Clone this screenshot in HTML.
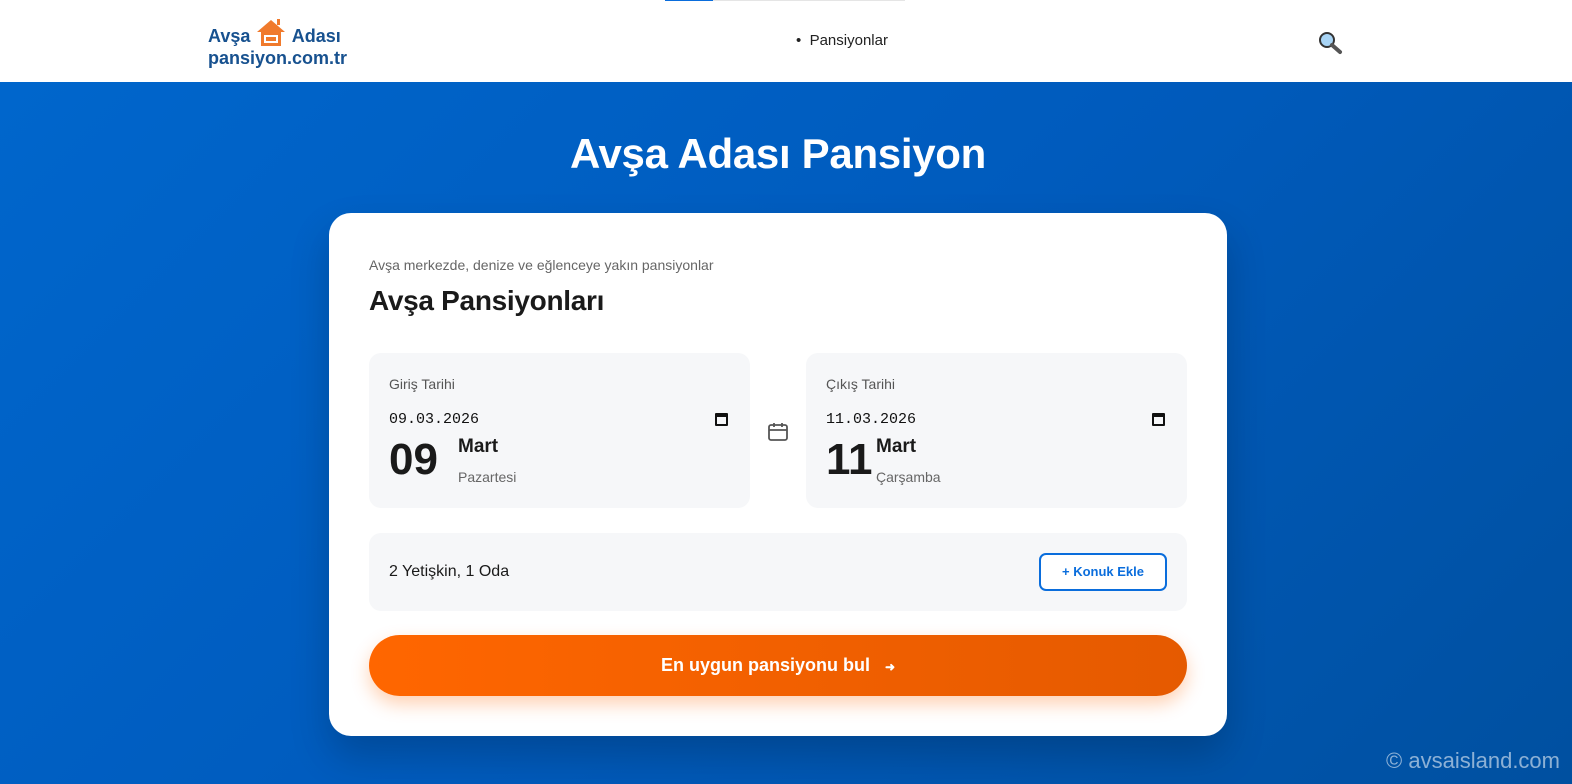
<!DOCTYPE html>
<html><head><meta charset="utf-8"><style>
*{box-sizing:border-box;margin:0;padding:0}
html{width:1572px;height:784px;overflow:hidden}
body{width:1572px;height:784px;overflow:hidden;font-family:"Liberation Sans",sans-serif;background:#0058b8;position:relative}
.hdr{height:82px;background:#fff;position:relative}
.bar{position:absolute;top:0;left:665px;width:240px;height:1px;background:#e5e5e5}
.bar i{display:block;width:48px;height:1px;background:#0a6ddc}
.logo{position:absolute;left:208px;top:18px;color:#17518f;font-weight:bold;font-size:18px;line-height:22px}
.nav{position:absolute;left:796px;top:32px;font-size:15px;color:#222}
.hero{position:absolute;top:82px;left:0;right:0;bottom:0;background:linear-gradient(135deg,#0066cc 0%,#005bbd 50%,#0050a0 100%)}
h1{position:absolute;top:130px;width:1556px;text-align:center;color:#fff;font-size:42px;font-weight:bold;letter-spacing:-0.3px}
.card{position:absolute;left:329px;top:213px;width:898px;height:523px;background:#fff;border-radius:22px;box-shadow:0 20px 40px rgba(0,0,0,.2)}
.sub{position:absolute;left:40px;top:44px;font-size:14px;color:#666}
.tt{position:absolute;left:40px;top:72px;font-size:28px;font-weight:bold;color:#1a1a1a;letter-spacing:-0.3px}
.box{position:absolute;background:#f6f7f9;border-radius:12px}
.lab{position:absolute;left:20px;top:23px;font-size:14px;color:#555}
.inp{position:absolute;left:20px;top:58px;font-family:"Liberation Mono",monospace;font-size:15px;color:#111}
.cal{position:absolute;right:22px;top:60px;width:13px;height:13px;border:2px solid #111;border-top-width:4px;border-radius:1px}
.big{position:absolute;left:20px;top:82px;font-size:44px;font-weight:bold;color:#1a1a1a}
.mon{position:absolute;left:89px;top:83px;font-size:19px;font-weight:bold;color:#1a1a1a}
.day{position:absolute;left:89px;top:116px;font-size:14px;color:#666}
.btn{position:absolute;left:40px;top:422px;width:818px;height:61px;border-radius:31px;background:linear-gradient(90deg,#ff6600,#e55a00);color:#fff;font-weight:bold;font-size:18px;text-align:center;line-height:61px;box-shadow:0 8px 18px rgba(255,102,0,.3)}
.konuk{position:absolute;right:20px;top:20px;width:128px;height:38px;border:2px solid #0a6ddc;border-radius:7px;color:#0a6ddc;font-weight:bold;font-size:13px;text-align:center;line-height:34px;background:#fff}
.copy{position:absolute;right:12px;top:748px;color:rgba(255,255,255,.55);font-size:22px;line-height:26px}
</style></head><body>
<div class="hdr"><div class="bar"><i></i></div>
<div class="logo">Avşa <span style="display:inline-block;width:32px;height:28px;vertical-align:-6px;position:relative"><svg width="32" height="30" viewBox="0 0 30 30"><path d="M1 14 L15 2 L29 14" fill="#f07a2c"/><rect x="5" y="13" width="20" height="15" fill="#f07a2c"/><rect x="8" y="17" width="14" height="8" fill="#fff"/><rect x="10" y="19" width="10" height="4" fill="#f07a2c"/><rect x="21" y="1" width="3" height="6" fill="#f07a2c"/></svg></span> Adası<br>pansiyon.com.tr</div>
<div class="nav">•&nbsp;&nbsp;Pansiyonlar</div>
<svg style="position:absolute;left:1318px;top:31px" width="26" height="24" viewBox="0 0 26 24"><circle cx="9" cy="9" r="7" fill="#a8d4f5" stroke="#333" stroke-width="2"/><path d="M14 14 L22 21" stroke="#555" stroke-width="4" stroke-linecap="round"/></svg>
</div>
<div class="hero"></div>
<h1>Avşa Adası Pansiyon</h1>
<div class="card">
<div class="sub">Avşa merkezde, denize ve eğlenceye yakın pansiyonlar</div>
<div class="tt">Avşa Pansiyonları</div>
<div class="box" style="left:40px;top:140px;width:381px;height:155px"><div class="lab">Giriş Tarihi</div><div class="inp">09.03.2026</div><div class="cal"></div><div class="big">09</div><div class="mon">Mart</div><div class="day">Pazartesi</div></div>
<svg style="position:absolute;left:438px;top:208px" width="22" height="22" viewBox="0 0 22 22"><rect x="2" y="4" width="18" height="15" rx="2" fill="none" stroke="#555" stroke-width="1.8"/><path d="M2 9H20M7 2V6M15 2V6" stroke="#555" stroke-width="1.8"/></svg>
<div class="box" style="left:477px;top:140px;width:381px;height:155px"><div class="lab">Çıkış Tarihi</div><div class="inp">11.03.2026</div><div class="cal"></div><div class="big">11</div><div class="mon" style="left:70px">Mart</div><div class="day" style="left:70px">Çarşamba</div></div>
<div class="box" style="left:40px;top:320px;width:818px;height:78px"><div style="position:absolute;left:20px;top:30px;font-size:16px;color:#1a1a1a">2 Yetişkin, 1 Oda</div><div class="konuk">+ Konuk Ekle</div></div>
<div class="btn">En uygun pansiyonu bul &nbsp;&nbsp;<span style="font-size:12px">➜</span></div>
</div>
<div class="copy">© avsaisland.com</div>
</body></html>
